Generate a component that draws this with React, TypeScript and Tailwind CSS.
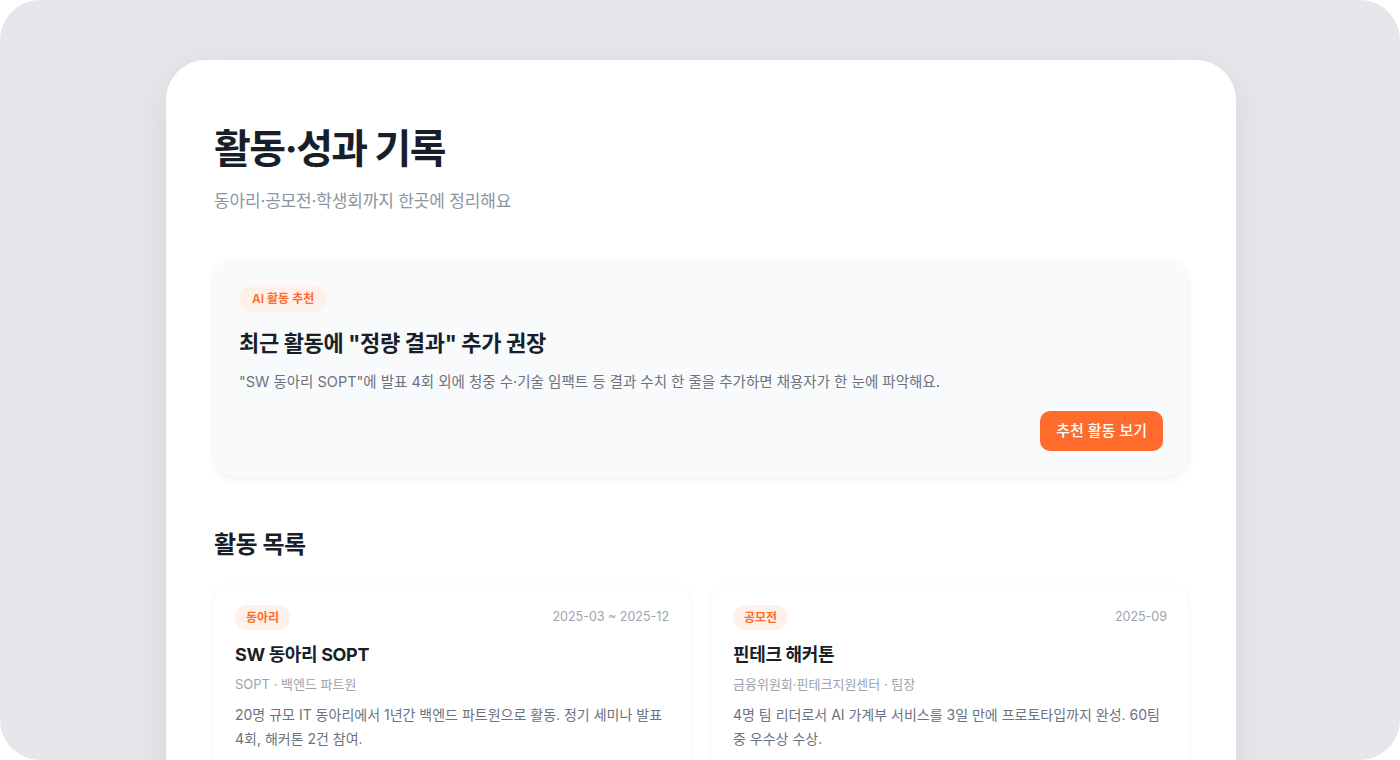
const font = { fontFamily: 'Inter, "Noto Sans CJK KR", sans-serif' };

const activities = [
  {
    tag: '동아리',
    period: '2025-03 ~ 2025-12',
    title: 'SW 동아리 SOPT',
    meta: 'SOPT · 백엔드 파트원',
    desc: '20명 규모 IT 동아리에서 1년간 백엔드 파트원으로 활동. 정기 세미나 발표 4회, 해커톤 2건 참여.',
  },
  {
    tag: '공모전',
    period: '2025-09',
    title: '핀테크 해커톤',
    meta: '금융위원회·핀테크지원센터 · 팀장',
    desc: '4명 팀 리더로서 AI 가계부 서비스를 3일 만에 프로토타입까지 완성. 60팀 중 우수상 수상.',
  },
];

function ActivityCard({ a }: { a: (typeof activities)[number] }) {
  return (
    <div className="rounded-2xl bg-white px-[21px] pt-5 pb-6 shadow-[0_1px_6px_rgba(15,23,42,0.06)]">
      <div className="flex items-center justify-between">
        <span className="rounded-full bg-[#fff1ea] px-[11px] py-[3px] text-[12px] leading-[19px] font-semibold text-[#ff6b2c]">{a.tag}</span>
        <span className="text-[12.5px] text-[#9ca3af]">{a.period}</span>
      </div>
      <h3 className="mt-3 text-[18px] leading-[26px] font-bold tracking-[-0.02em] text-[#191f28]">{a.title}</h3>
      <p className="mt-[6px] text-[13px] leading-5 text-[#9ca3af]">{a.meta}</p>
      <p className="mt-[9px] text-[14px] leading-6 text-[#6b7280]">{a.desc}</p>
    </div>
  );
}

export default function App() {
  return (
    <div className="h-[760px] w-[1400px] overflow-hidden bg-white" style={font}>
      <div className="h-full overflow-hidden rounded-[40px] bg-[#e5e7eb] pt-[60px] pr-[164px] pl-[166px]">
        <div className="min-h-[800px] rounded-t-[40px] bg-white px-12 pt-[65px] shadow-[0_10px_40px_rgba(15,23,42,0.08)]">
          <h1 className="text-[40px] font-bold leading-[48px] tracking-[-0.04em] text-[#191f28]">활동·성과 기록</h1>
          <p className="mt-4 text-[17px] leading-6 tracking-[-0.01em] text-[#8b95a1]">동아리·공모전·학생회까지 한곳에 정리해요</p>

          <section className="mt-12 rounded-[20px] bg-[#f9fafb] px-[25px] pt-6 pb-[25px] shadow-[0_2px_8px_rgba(15,23,42,0.07)]">
            <span className="inline-block rounded-full bg-[#fff1ea] px-[13px] py-[5px] text-[12px] leading-[17px] font-semibold text-[#ff6b2c]">AI 활동 추천</span>
            <h2 className="mt-4 text-[22px] font-bold leading-[30px] tracking-[-0.015em] text-[#191f28]">최근 활동에 "정량 결과" 추가 권장</h2>
            <p className="mt-3 text-[14.5px] leading-6 text-[#6b7280]">"SW 동아리 SOPT"에 발표 4회 외에 청중 수·기술 임팩트 등 결과 수치 한 줄을 추가하면 채용자가 한 눈에 파악해요.</p>
            <div className="mt-[17px] flex justify-end">
              <button className="h-10 rounded-[10px] bg-[#ff6b2c] px-4 text-[15px] font-medium text-white">추천 활동 보기</button>
            </div>
          </section>

          <h2 className="mt-[53px] text-[24px] font-bold leading-8 tracking-[-0.02em] text-[#191f28]">활동 목록</h2>
          <div className="mt-6 grid grid-cols-2 gap-[22px]">
            {activities.map(a => (
              <ActivityCard key={a.title} a={a} />
            ))}
          </div>
        </div>
      </div>
    </div>
  );
}
